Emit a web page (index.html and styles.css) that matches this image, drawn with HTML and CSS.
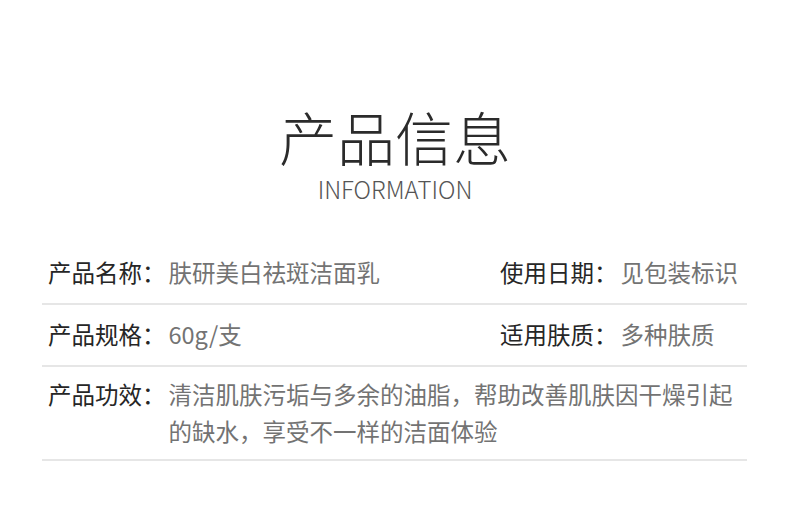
FILE: index.html
```html
<!DOCTYPE html>
<html lang="zh-CN">
<head>
<meta charset="utf-8">
<title>产品信息</title>
<link rel="stylesheet" href="styles.css">
</head>
<body>
<div class="page">
  <header class="heading">
    <h1 class="title">产品信息</h1>
    <p class="subtitle">INFORMATION</p>
  </header>
  <div class="table">
    <div class="row">
      <div class="cell"><span class="label">产品名称：</span><span class="value">肤研美白祛斑洁面乳</span></div>
      <div class="cell"><span class="label">使用日期：</span><span class="value">见包装标识</span></div>
    </div>
    <div class="row">
      <div class="cell"><span class="label">产品规格：</span><span class="value">60g/支</span></div>
      <div class="cell"><span class="label">适用肤质：</span><span class="value">多种肤质</span></div>
    </div>
    <div class="row row-wide">
      <div class="cell cell-full"><span class="label">产品功效：</span><span class="value">清洁肌肤污垢与多余的油脂，帮助改善肌肤因干燥引起的缺水，享受不一样的洁面体验</span></div>
    </div>
  </div>
</div>
</body>
</html>
```

FILE: styles.css
```css
html, body {
  margin: 0;
  padding: 0;
  background: #ffffff;
}

.page {
  width: 790px;
  height: 514px;
  font-family: "Noto Sans CJK SC", "Noto Sans", sans-serif;
}

.heading {
  padding-top: 107px;
  text-align: center;
}

.title {
  margin: 0;
  font-size: 58px;
  line-height: 58px;
  font-weight: 300;
  color: #2b2b2b;
}

.subtitle {
  margin: 11px 0 0;
  font-size: 24px;
  line-height: 25px;
  font-weight: 300;
  color: #555555;
}

.table {
  margin: 42px 43px 0 42px;
}

.row {
  display: grid;
  grid-template-columns: 458px 1fr;
  padding: 11px 0 12px;
  border-bottom: 2px solid #e6e6e6;
}

.row-wide {
  padding: 9px 0 9px;
}

.cell {
  display: flex;
  align-items: flex-start;
  gap: 3px;
  font-size: 23.5px;
  line-height: 37px;
}

.cell:first-child {
  padding-left: 6px;
}

.cell-full {
  grid-column: 1 / -1;
}

.label {
  flex: none;
  color: #262626;
}

.value {
  color: #737373;
}
```
